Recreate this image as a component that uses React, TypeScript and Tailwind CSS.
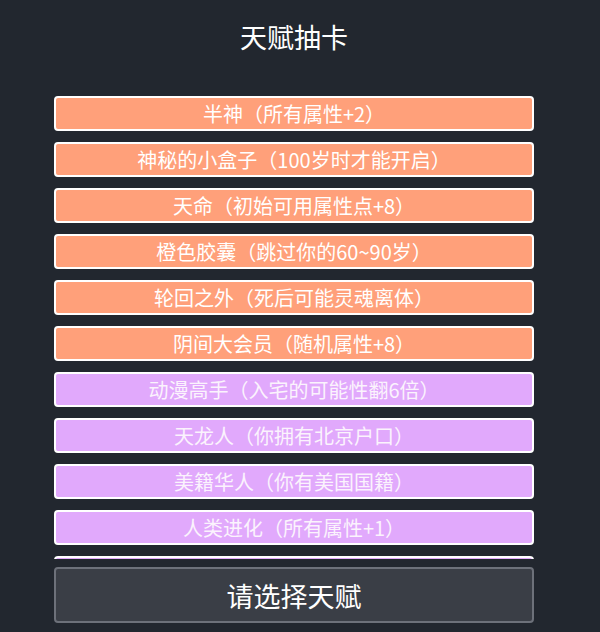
const talents = [
  { name: "半神（所有属性+2）", grade: 2 },
  { name: "神秘的小盒子（100岁时才能开启）", grade: 2 },
  { name: "天命（初始可用属性点+8）", grade: 2 },
  { name: "橙色胶囊（跳过你的60~90岁）", grade: 2 },
  { name: "轮回之外（死后可能灵魂离体）", grade: 2 },
  { name: "阴间大会员（随机属性+8）", grade: 2 },
  { name: "动漫高手（入宅的可能性翻6倍）", grade: 1 },
  { name: "天龙人（你拥有北京户口）", grade: 1 },
  { name: "美籍华人（你有美国国籍）", grade: 1 },
  { name: "人类进化（所有属性+1）", grade: 1 },
  { name: "祖传药丸（体质+2）", grade: 1 },
];

export default function App() {
  return (
    <div
      className="h-[632px] w-full bg-[#22272f] overflow-hidden"
      style={{ fontFamily: '"Noto Sans CJK SC", "Noto Sans", sans-serif' }}
    >
      <div className="w-[588px] flex flex-col items-center">
        {/* Title */}
        <h1 className="mt-[18px] text-[27px] leading-[38px] text-white font-normal">天赋抽卡</h1>

        {/* Talent list (scrollable) */}
        <div className="mt-[40px] w-[480px] h-[463px] overflow-hidden flex flex-col gap-[11px]">
          {talents.map((t) => (
            <div
              key={t.name}
              className={`shrink-0 h-[35px] rounded-[4px] border-2 border-white flex items-center justify-center text-[20px] leading-none ${
                t.grade === 2 ? "bg-[#ffa07a] text-white" : "bg-[#e1a9fc] text-[#fbf3fd]"
              }`}
            >
              {t.name}
            </div>
          ))}
        </div>

        {/* Action button */}
        <button className="mt-[8px] w-[480px] h-[56px] rounded-[4px] border-2 border-[#6d717a] bg-[#3a3e46] text-white text-[27px] leading-none flex items-center justify-center">
          请选择天赋
        </button>
      </div>
    </div>
  );
}
